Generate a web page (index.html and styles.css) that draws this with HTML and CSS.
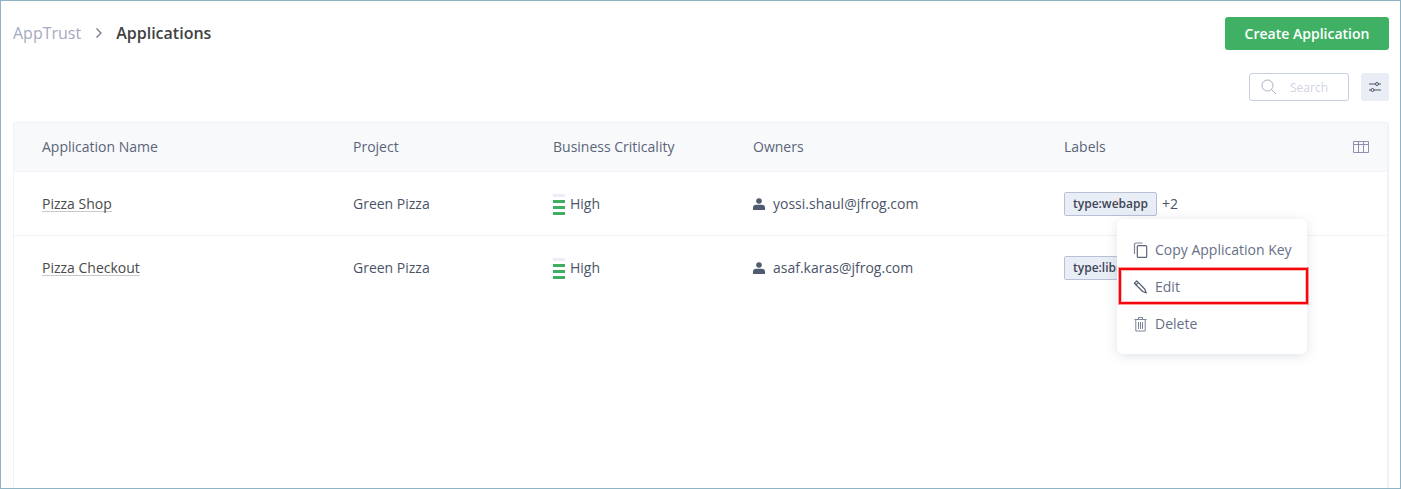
FILE: index.html
```html
<!DOCTYPE html>
<html lang="en">
<head>
<meta charset="utf-8">
<title>Applications</title>
<link rel="stylesheet" href="styles.css">
</head>
<body>
<div class="frame">
  <header class="top">
    <nav class="crumbs">
      <span class="crumb-root">AppTrust</span>
      <svg class="crumb-sep" width="8" height="12" viewBox="0 0 8 12"><path d="M1.500 1.500 6 6l-4.500 4.500" fill="none" stroke="#6b7280" stroke-width="1.200"/></svg>
      <span class="crumb-current">Applications</span>
    </nav>
    <button class="create">Create Application</button>
  </header>
  <div class="tools">
    <div class="search">
      <svg width="16" height="16" viewBox="0 0 16 16"><circle cx="6.500" cy="6.500" r="5.500" fill="none" stroke="#a9afc4" stroke-width="1"/><path d="m10.500 10.500 4.500 4.500" stroke="#a9afc4" stroke-width="1"/></svg>
      <span class="search-text">Search</span>
    </div>
    <button class="filter">
      <svg width="12" height="10" viewBox="0 0 12 10"><path d="M0 2h12M0 8h12" stroke="#4c5568" stroke-width="1"/><circle cx="8" cy="2" r="1.500" fill="#e9edf5" stroke="#4c5568"/><circle cx="3.500" cy="8" r="1.500" fill="#e9edf5" stroke="#4c5568"/></svg>
    </button>
  </div>
  <section class="table">
    <div class="row head">
      <div>Application Name</div>
      <div>Project</div>
      <div>Business Criticality</div>
      <div>Owners</div>
      <div>Labels</div>
      <svg class="cols" width="16" height="12" viewBox="0 0 16 12"><path d="M.5.500h15v11H.5zM.5 3.500h15M5.500.500v11M10.500.500v11" fill="none" stroke="#8b90ab" stroke-width="1"/></svg>
    </div>
    <div class="row">
      <div><span class="app">Pizza Shop</span></div>
      <div>Green Pizza</div>
      <div class="crit"><span class="bars"><i class="off"></i><i></i><i></i><i></i></span>High</div>
      <div class="owner"><svg width="12" height="12" viewBox="0 0 12 12"><circle cx="6" cy="3" r="2.800" fill="#4f5b70"/><path d="M0 12V9.500C0 7.800 1.500 6.800 3 6.800h6c1.500 0 3 1 3 2.700V12z" fill="#4f5b70"/></svg>yossi.shaul@jfrog.com</div>
      <div class="labels"><span class="tag">type:webapp</span><span>+2</span></div>
    </div>
    <div class="row">
      <div><span class="app">Pizza Checkout</span></div>
      <div>Green Pizza</div>
      <div class="crit"><span class="bars"><i class="off"></i><i></i><i></i><i></i></span>High</div>
      <div class="owner"><svg width="12" height="12" viewBox="0 0 12 12"><circle cx="6" cy="3" r="2.800" fill="#4f5b70"/><path d="M0 12V9.500C0 7.800 1.500 6.800 3 6.800h6c1.500 0 3 1 3 2.700V12z" fill="#4f5b70"/></svg>asaf.karas@jfrog.com</div>
      <div class="labels"><span class="tag">type:library</span></div>
    </div>
  </section>
  <div class="menu">
    <div class="item">
      <svg width="14" height="16" viewBox="0 0 14 16"><path d="M1 12V2.500C1 1.600 1.600 1 2.500 1H9" fill="none" stroke="#7d8598" stroke-width="1.200"/><rect x="3.800" y="3.600" width="9.400" height="11.800" rx="1" fill="none" stroke="#5d667a" stroke-width="1.200"/></svg>
      <span>Copy Application Key</span>
    </div>
    <div class="item">
      <svg width="14" height="14" viewBox="0 0 15 15"><path d="M3.500 1 1 3.500l8.800 8.800 3.900 1.500-1.500-3.900zM2.700 5.200l2.500-2.500" fill="none" stroke="#4f586c" stroke-width="1.200" stroke-linejoin="round"/></svg>
      <span>Edit</span>
    </div>
    <div class="item">
      <svg width="14" height="16" viewBox="0 0 14 16"><path d="M1 3.500h12M5 3.300V1.500h4v1.800M2.300 3.500V15h9.400V3.500M5 6v7M7 6v7M9 6v7" fill="none" stroke="#7d8598" stroke-width="1"/></svg>
      <span>Delete</span>
    </div>
    <div class="mark"></div>
  </div>
</div>
</body>
</html>
```

FILE: styles.css
```css
* { box-sizing: border-box; }
html, body { margin: 0; padding: 0; }
body {
  font-family: "Open Sans", "Liberation Sans", sans-serif;
  font-size: 14px;
  color: #4a5468;
  background: #fff;
}
.frame {
  position: relative;
  width: 1401px;
  height: 489px;
  border: 1px solid #8fb4c4;
  padding: 16px 11px 0 12px;
  overflow: hidden;
}
.top {
  display: flex;
  justify-content: space-between;
  align-items: center;
  height: 33px;
}
.crumbs { display: flex; align-items: center; font-size: 16px; margin-bottom: 2px; }
.crumb-root { color: #a6a9c0; }
.crumb-sep { margin: 0 13px 0 14px; }
.crumb-current { color: #414141; font-weight: 600; }
.create {
  width: 164px;
  height: 33px;
  border: 0;
  border-radius: 3px;
  background: #40b065;
  color: #fff;
  font: 600 14px "Open Sans", "Liberation Sans", sans-serif;
  padding: 0;
}
.tools {
  display: flex;
  justify-content: flex-end;
  gap: 12px;
  margin-top: 23px;
  height: 28px;
}
.search {
  width: 100px;
  height: 28px;
  border: 1px solid #c8cee2;
  border-radius: 3px;
  display: flex;
  align-items: center;
  padding-left: 11px;
}
.search-text { margin-left: 13px; font-size: 12px; color: #d0d4e3; }
.filter {
  width: 28px;
  height: 28px;
  border: 0;
  border-radius: 3px;
  background: #e9edf5;
  padding: 0;
  display: flex;
  align-items: center;
  justify-content: center;
}
.table {
  margin-top: 21px;
  height: 400px;
  border: 1px solid #f1f2f7;
  border-right-width: 2px;
  border-radius: 3px;
}
.row {
  position: relative;
  display: grid;
  grid-template-columns: 311px 200px 200px 311px 1fr;
  align-items: center;
  height: 64px;
  padding-left: 28px;
  border-bottom: 1px solid #f0f1f4;
  color: #4a5468;
}
.row:last-child { height: 63px; border-bottom: 0; }
.row.head {
  height: 49px;
  padding-bottom: 2px;
  background: #f8f9fb;
  color: #5b6579;
  border-bottom-color: #f1f2f7;
}
.cols { position: absolute; right: 18px; top: 18px; }
.app {
  color: #4a4a4a;
  border-bottom: 1px solid #c9c9c9;
  line-height: 15px;
  display: inline-block;
}
.crit { display: flex; align-items: center; gap: 5px; }
.bars { display: flex; flex-direction: column; gap: 3px; width: 12px; margin-top: 2px; }
.bars i { display: block; height: 3px; background: #3fae63; }
.bars i.off { background: #e9edf5; }
.owner { display: flex; align-items: center; gap: 8px; }
.labels { display: flex; align-items: center; gap: 5px; }
.tag {
  height: 24px;
  line-height: 22px;
  padding: 0 8px;
  border: 1px solid #b9c0d6;
  border-radius: 2px;
  background: #e9edf5;
  color: #3f4657;
  font-size: 12px;
  font-weight: 600;
}
.menu {
  position: absolute;
  left: 1116px;
  top: 218px;
  width: 190px;
  height: 135px;
  padding-top: 12px;
  background: #fff;
  border-radius: 6px;
  box-shadow: 0 2px 12px rgba(70, 80, 110, .16);
}
.item {
  display: flex;
  align-items: center;
  height: 37px;
  padding-left: 16px;
  color: #667085;
}
.item svg { width: 15px; flex: none; }
.item span { margin-left: 7px; }
.mark {
  position: absolute;
  left: 2px;
  top: 49px;
  width: 189px;
  height: 36px;
  border: 2px solid #f5060c;
  box-shadow: 0 0 0 1px rgba(255, 0, 0, .4), inset 0 0 0 1px rgba(255, 0, 0, .25);
}
```
